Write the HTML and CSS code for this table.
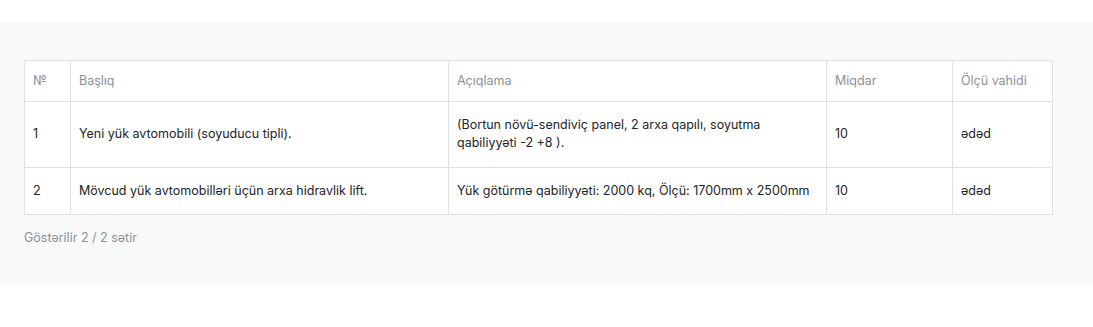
FILE: index.html
```html
<!DOCTYPE html>
<html lang="az">
<head>
<meta charset="utf-8">
<link rel="stylesheet" href="styles.css">
</head>
<body>
<section class="band">
  <table class="items">
    <colgroup>
      <col class="c-no"><col class="c-title"><col class="c-desc"><col class="c-qty"><col class="c-unit">
    </colgroup>
    <thead>
      <tr><th>№</th><th>Başlıq</th><th>Açıqlama</th><th>Miqdar</th><th>Ölçü vahidi</th></tr>
    </thead>
    <tbody>
      <tr>
        <td>1</td>
        <td>Yeni yük avtomobili (soyuducu tipli).</td>
        <td>(Bortun növü-sendiviç panel, 2 arxa qapılı, soyutma qabiliyyəti -2 +8 ).</td>
        <td>10</td>
        <td>ədəd</td>
      </tr>
      <tr>
        <td>2</td>
        <td>Mövcud yük avtomobilləri üçün arxa hidravlik lift.</td>
        <td>Yük götürmə qabiliyyəti: 2000 kq, Ölçü: 1700mm x 2500mm</td>
        <td>10</td>
        <td>ədəd</td>
      </tr>
    </tbody>
  </table>
  <p class="summary">Göstərilir 2 / 2 sətir</p>
</section>
</body>
</html>
```
FILE: styles.css
```css
html, body {
  margin: 0;
  padding: 0;
  background: #ffffff;
}
body {
  font-family: Inter, "Noto Sans", sans-serif;
  font-size: 12.5px;
  color: #212529;
}
.band {
  margin-top: 22px;
  background: #f8f9f9;
  padding: 38px 41px 0 24px;
  height: 225px;
}
.items {
  width: 1028px;
  border-collapse: collapse;
  background: #ffffff;
  table-layout: fixed;
}
.c-no { width: 46px; }
.c-title { width: 378px; }
.c-desc { width: 378px; }
.c-qty { width: 126px; }
.c-unit { width: 100px; }
.items th, .items td {
  border: 1px solid #dee2e6;
  text-align: left;
  vertical-align: middle;
  line-height: 18.5px;
  padding: 14px 8px;
}
.items th {
  font-weight: 400;
  color: #8a9199;
  padding: 11px 8px 10px;
}
.summary {
  margin: 14px 0 0;
  color: #8a9199;
  line-height: 18.5px;
}
```
